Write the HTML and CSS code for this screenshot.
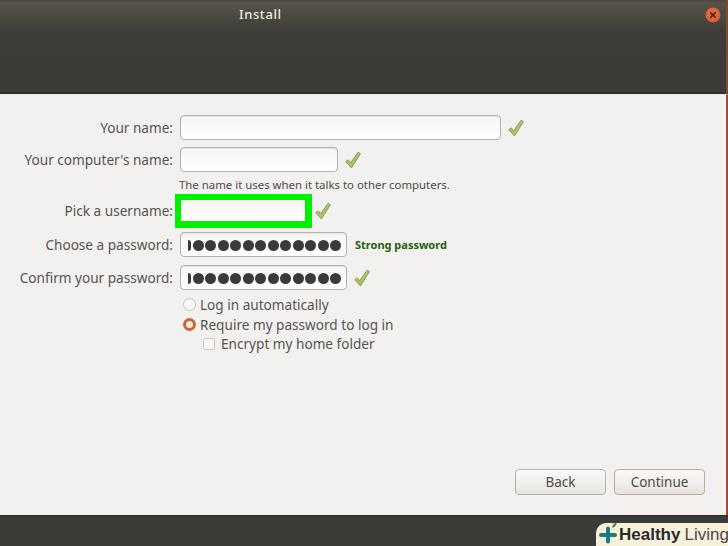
FILE: index.html
```html
<!DOCTYPE html>
<html lang="en">
<head>
<meta charset="utf-8">
<title>Install</title>
<link rel="stylesheet" href="styles.css">
</head>
<body>
<div class="window">
  <header class="titlebar">
    <h1 class="title">Install</h1>
    <span class="close" aria-label="Close">
      <svg viewBox="0 0 16 16" width="16" height="16"><circle cx="8" cy="8" r="7.5" fill="#dd5a2c"/><circle cx="8" cy="7" r="6" fill="#e4683a"/><path d="M5.6 5.6l4.8 4.8M10.400 5.6l-4.800 4.800" stroke="#4a2a1c" stroke-width="1.5" stroke-linecap="round"/></svg>
    </span>
  </header>
  <main class="content">
    <form class="form">
      <div class="row row-name">
        <label class="label">Your name:</label>
        <span class="field w-name"></span>
        <svg class="check" viewBox="0 0 16 16"><path d="M1.5 9.5l2.4-1.6 2 2.6L12.6 1l2 1.4L6.6 15z" fill="#a9c46c" stroke="#7d9a45" stroke-width=".8"/></svg>
      </div>
      <div class="row row-computer">
        <label class="label">Your computer's name:</label>
        <span class="field w-computer"></span>
        <svg class="check" viewBox="0 0 16 16"><path d="M1.5 9.5l2.4-1.6 2 2.6L12.6 1l2 1.4L6.6 15z" fill="#a9c46c" stroke="#7d9a45" stroke-width=".8"/></svg>
      </div>
      <p class="hint">The name it uses when it talks to other computers.</p>
      <div class="row row-user">
        <label class="label">Pick a username:</label>
        <span class="field-highlight"><span class="field-inner"></span></span>
        <svg class="check" viewBox="0 0 16 16"><path d="M1.5 9.5l2.4-1.6 2 2.6L12.6 1l2 1.4L6.6 15z" fill="#a9c46c" stroke="#7d9a45" stroke-width=".8"/></svg>
      </div>
      <div class="row row-pass">
        <label class="label">Choose a password:</label>
        <span class="field w-pass dots"><i class="dot cut"></i><i class="dot"></i><i class="dot"></i><i class="dot"></i><i class="dot"></i><i class="dot"></i><i class="dot"></i><i class="dot"></i><i class="dot"></i><i class="dot"></i><i class="dot"></i><i class="dot"></i><i class="dot"></i></span>
        <span class="strong">Strong password</span>
      </div>
      <div class="row row-confirm">
        <label class="label">Confirm your password:</label>
        <span class="field w-pass dots"><i class="dot cut"></i><i class="dot"></i><i class="dot"></i><i class="dot"></i><i class="dot"></i><i class="dot"></i><i class="dot"></i><i class="dot"></i><i class="dot"></i><i class="dot"></i><i class="dot"></i><i class="dot"></i><i class="dot"></i></span>
        <svg class="check" viewBox="0 0 16 16"><path d="M1.5 9.5l2.4-1.6 2 2.6L12.6 1l2 1.4L6.6 15z" fill="#a9c46c" stroke="#7d9a45" stroke-width=".8"/></svg>
      </div>
      <div class="opt opt-first"><span class="radio"></span>Log in automatically</div>
      <div class="opt"><span class="radio on"></span>Require my password to log in</div>
      <div class="opt opt-sub"><span class="box"></span>Encrypt my home folder</div>
    </form>
    <div class="actions">
      <button class="btn" type="button">Back</button>
      <button class="btn primary" type="button">Continue</button>
    </div>
  </main>
  <footer class="footer">
    <div class="brand">
      <svg class="logo" viewBox="0 0 24 24" width="24" height="24"><path d="M10 7.5a2 2 0 0 1 4 0V12h5a2 2 0 0 1 0 4h-5v4.500a2 2 0 0 1-4 0V16H5a2 2 0 0 1 0-4h5z" fill="#1d7b80"/><path d="M16 7c0-3 2-5 5-6 0 3-2 5-5 6z" fill="#4b8f3a"/></svg>
      <span class="brand-a">Healthy</span><span class="brand-b">Living</span>
    </div>
  </footer>
</div>
</body>
</html>
```
FILE: styles.css
```css
* { box-sizing: border-box; }
html, body { margin: 0; padding: 0; }
body { width: 728px; height: 546px; overflow: hidden; font-family: "Noto Sans", "Open Sans", sans-serif; color: #4c4c48; }
.window { width: 728px; height: 546px; display: flex; flex-direction: column; background: #3c3b37; }

.titlebar { height: 95px; flex: none; position: relative; background: linear-gradient(#4a4740 0, #57534a 3px, #4a473f 18px, #3f3e39 30px, #3c3b37 60px); border-bottom: 1px solid #e8e6e2; border-right: 2px solid #8a4428; box-shadow: inset 0 -2px 0 #33322e; padding: 5px 0 0 239px; }
.title { margin: 0; font-size: 13px; line-height: 18px; font-weight: 500; color: #eeeae2; letter-spacing: .6px; }
.close { position: absolute; left: 705px; top: 7px; width: 16px; height: 16px; display: block; }
.close svg { display: block; }

.content { flex: 1; background: #f2f1ef; border-right: 2px solid #a8492a; display: flex; flex-direction: column; padding-top: 20px; }
.form { flex: 1; }
.row { display: flex; align-items: center; }
.label { width: 173px; text-align: right; font-size: 13.6px; line-height: 20px; margin-right: 7px; flex: none; color: #55554f; }
.field { display: block; height: 25px; flex: none; background: linear-gradient(#f6f5f3, #fff); border: 1px solid #b4b2ac; border-radius: 4px; box-shadow: inset 0 1px 1px #e6e5e2; }
.w-name { width: 321px; }
.w-computer { width: 158px; }
.w-pass { width: 167px; }
.check { width: 18px; height: 18px; flex: none; margin-left: 6px; }

.row-computer { margin-top: 7px; }
.hint { margin: 5px 0 0 179px; font-size: 11.4px; line-height: 16px; color: #4c4c48; white-space: nowrap; }
.row-user { margin-top: 1px; height: 34px; }
.row-user .label { width: 173px; margin-right: 2px; }
.field-highlight { width: 137px; height: 34px; flex: none; background: #00f000; padding: 6px 7px 7px 6px; }
.field-inner { display: block; height: 21px; background: linear-gradient(#f4f4f2, #fff); }
.row-user .check { margin-left: 2px; }
.row-pass { margin-top: 4px; }
.row-confirm { margin-top: 8px; }

.dots { display: flex; align-items: center; justify-content: flex-end; gap: 1.5px; padding-right: 5px; padding-top: 2px; overflow: hidden; }
.dot { display: block; width: 11px; height: 11px; border-radius: 50%; background: #3a3a3a; flex: none; }
.dot.cut { width: 3px; border-radius: 0 6px 6px 0; }
.strong { font-size: 11px; font-weight: 700; color: #1e6212; margin-left: 8px; white-space: nowrap; }

.opt { display: flex; align-items: center; height: 19.5px; margin-left: 183px; font-size: 13.6px; color: #55554f; }
.opt-first { margin-top: 5px; }
.opt-sub { margin-left: 203px; }
.radio { width: 13px; height: 13px; border-radius: 50%; background: #f8f8f6; border: 1px solid #c4c2bc; margin-right: 4px; flex: none; }
.radio.on { background: #fbe6d8; border: 3.5px solid #c4683c; }
.box { width: 12px; height: 12px; border-radius: 2px; background: #f8f8f6; border: 1px solid #c8c6c0; margin-right: 6px; flex: none; }

.actions { display: flex; justify-content: flex-end; gap: 8px; padding-right: 21px; padding-bottom: 20px; }
.btn { width: 91px; height: 26px; padding: 0; font: inherit; font-size: 13.5px; color: #4c4c48; background: linear-gradient(#fafaf8, #e6e4e0); border: 1px solid #b4b2ac; border-radius: 4px; }
.primary { border-color: #c8a89a; }

.footer { height: 31px; flex: none; background: #3c3b37; display: flex; justify-content: flex-end; align-items: flex-end; border-top: 1px solid #2e2d2a; }
.brand { width: 132px; height: 23px; background: #f7f1dc; border-radius: 10px 0 0 0; display: flex; align-items: center; position: relative; padding-left: 23px; font-family: "Liberation Sans", sans-serif; font-size: 17px; white-space: nowrap; }
.logo { position: absolute; left: 0; top: -2px; }
.brand-a { font-weight: 700; color: #2a2a2a; margin-right: 4px; }
.brand-b { color: #4a4a48; }
```
